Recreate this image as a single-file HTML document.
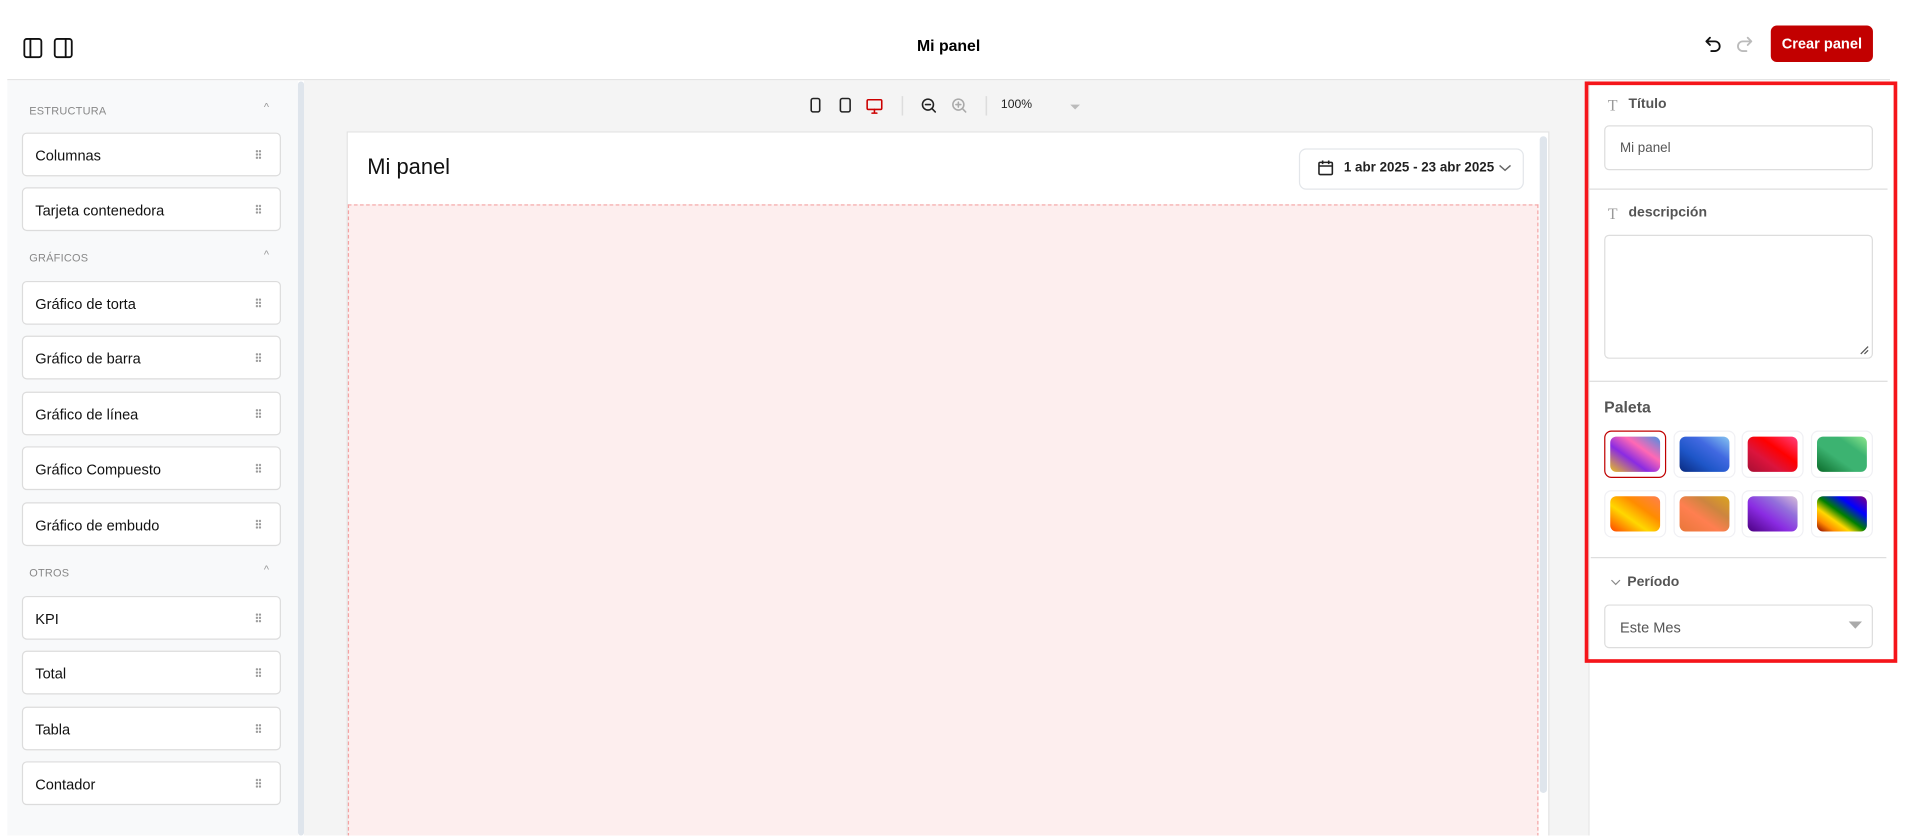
<!DOCTYPE html>
<html><head><meta charset="utf-8"><style>
*{box-sizing:border-box;margin:0;padding:0}
html,body{width:1907px;height:835px;overflow:hidden;background:#fff;font-family:"Liberation Sans",sans-serif}
#w{position:absolute;left:0;top:0;width:1568px;height:687px;transform:scale(1.21620);transform-origin:0 0;overflow:hidden}
.a{position:absolute}
.item{position:absolute;left:18px;width:213px;height:36px;background:#fff;border:1px solid #dcdcdc;border-radius:4px;font-size:12px;color:#111;padding:11px 0 0 10px}
.item:after{content:"";position:absolute;right:15px;top:13px;width:5px;height:8px;background:radial-gradient(circle,#999 0.8px,transparent 1.1px) 0 0/2.5px 2.7px}
.sec{position:absolute;left:24px;font-size:9px;color:#888;letter-spacing:.2px}
.car{position:absolute;left:217px;font-size:9px;color:#999}
.sw{position:absolute;width:51px;height:39px;border:1px solid #f0f0f4;border-radius:6px;padding:4px}
.sw div{width:100%;height:100%;border-radius:5px}
.lbl{position:absolute;font-size:11.5px;font-weight:bold;color:#555}
</style></head><body><div id="w">
<!-- header -->
<svg class="a" style="left:19px;top:31px" width="42" height="17" viewBox="0 0 42 17" fill="none" stroke="#111" stroke-width="1.5"><rect x="1" y="1" width="14" height="15" rx="2"/><line x1="6" y1="1" x2="6" y2="16"/><rect x="26" y="1" width="14" height="15" rx="2"/><line x1="35" y1="1" x2="35" y2="16"/></svg>
<div class="a" style="left:740px;top:30px;width:80px;text-align:center;font-size:13px;font-weight:bold">Mi panel</div>
<svg class="a" style="left:1401px;top:29px" width="42" height="16" viewBox="0 0 42 16" fill="none" stroke-width="1.5" stroke-linecap="round" stroke-linejoin="round"><path d="M5 2L2 5l3 3M2 5h7a4 4 0 010 8H6" stroke="#111"/><path d="M36 2l3 3-3 3M39 5h-7a4 4 0 000 8h3" stroke="#bbb"/></svg>
<div class="a" style="left:1456px;top:21px;width:84px;height:30px;background:#c20000;border-radius:5px;color:#fff;font-size:12px;font-weight:bold;text-align:center;line-height:30px">Crear panel</div>
<div class="a" style="left:6px;top:65px;width:1548px;height:1px;background:#e2e2e2"></div>
<!-- left sidebar -->
<div class="a" style="left:6px;top:66px;width:239px;height:621px;background:#f8f9fa"></div>
<div class="a" style="left:245px;top:67px;width:5px;height:620px;background:#dfe5ec;border-radius:3px"></div>
<div class="sec" style="top:86px">ESTRUCTURA</div><div class="car" style="top:83px">^</div>
<div class="item" style="top:109px">Columnas</div>
<div class="item" style="top:154px">Tarjeta contenedora</div>
<div class="sec" style="top:207px">GRÁFICOS</div><div class="car" style="top:204px">^</div>
<div class="item" style="top:231px">Gráfico de torta</div>
<div class="item" style="top:276px">Gráfico de barra</div>
<div class="item" style="top:322px">Gráfico de línea</div>
<div class="item" style="top:367px">Gráfico Compuesto</div>
<div class="item" style="top:413px">Gráfico de embudo</div>
<div class="sec" style="top:466px">OTROS</div><div class="car" style="top:463px">^</div>
<div class="item" style="top:490px">KPI</div>
<div class="item" style="top:535px">Total</div>
<div class="item" style="top:581px">Tabla</div>
<div class="item" style="top:626px">Contador</div>
<!-- canvas -->
<div class="a" style="left:250px;top:66px;width:1056px;height:621px;background:#f4f4f4"></div>
<svg class="a" style="left:662px;top:79px" width="240" height="16" viewBox="0 0 240 16" fill="none" stroke-width="1.3" stroke-linecap="round">
<rect x="5" y="2" width="7" height="11" rx="1.5" stroke="#222"/><rect x="29" y="2" width="8" height="11" rx="1.5" stroke="#222"/>
<rect x="51" y="3" width="12" height="8" rx="1" stroke="#c00"/><path d="M55 14h4M57 11v3" stroke="#c00"/>
<line x1="80" y1="0" x2="80" y2="16" stroke="#ddd"/>
<circle cx="101" cy="7" r="4.5" stroke="#222"/><path d="M99 7h4M104.5 10.5L107 13" stroke="#222"/>
<circle cx="126" cy="7" r="4.5" stroke="#aaa"/><path d="M124 7h4M126 5v4M129.5 10.5L132 13" stroke="#aaa"/>
<line x1="149" y1="0" x2="149" y2="16" stroke="#ddd"/>
<path d="M218 7l4 4 4-4z" fill="#bbb" stroke="none"/></svg>
<div class="a" style="left:823px;top:81px;font-size:10px;color:#222">100%</div>
<div class="a" style="left:285px;top:108px;width:989px;height:590px;background:#fff;border:1px solid #e3e3e3"></div>
<div class="a" style="left:302px;top:127px;font-size:18px;color:#111">Mi panel</div>
<div class="a" style="left:1068px;top:122px;width:185px;height:34px;border:1px solid #e3e6ea;border-radius:6px;background:#fff"></div>
<svg class="a" style="left:1083px;top:131px" width="14" height="14" viewBox="0 0 14 14" fill="none" stroke="#222" stroke-width="1.3"><rect x="1.5" y="2.5" width="11" height="10" rx="1"/><path d="M1.5 5.5h11M4.5 1v3M9.5 1v3"/></svg>
<div class="a" style="left:1105px;top:132px;font-size:11px;font-weight:bold;color:#222">1 abr 2025 - 23 abr 2025</div>
<svg class="a" style="left:1232px;top:134px" width="11" height="8" viewBox="0 0 11 8" fill="none" stroke="#666" stroke-width="1.2"><path d="M1 2l4.5 4L10 2"/></svg>
<div class="a" style="left:286px;top:168px;width:979px;height:530px;background:#fdeeee;border:1px dashed #f4a3a3"></div>
<div class="a" style="left:1266px;top:112px;width:6px;height:540px;background:#dfe5ec;border-radius:3px"></div>
<!-- right panel -->
<div class="a" style="left:1306px;top:66px;width:1px;height:621px;background:#e5e5e5"></div>
<div class="a" style="left:1303px;top:67px;width:257px;height:478px;border:3px solid #f5151a"></div>
<div class="a" style="left:1322px;top:79px;font-size:13px;color:#999;font-family:'Liberation Serif',serif">T</div>
<div class="lbl" style="left:1339px;top:80px">Título</div>
<div class="a" style="left:1319px;top:103px;width:221px;height:37px;border:1px solid #ddd;border-radius:4px;font-size:11px;color:#555;padding:12px 0 0 12px">Mi panel</div>
<div class="a" style="left:1306px;top:155px;width:246px;height:1px;background:#ddd"></div>
<div class="a" style="left:1322px;top:168px;font-size:13px;color:#999;font-family:'Liberation Serif',serif">T</div>
<div class="lbl" style="left:1339px;top:169px">descripción</div>
<div class="a" style="left:1319px;top:193px;width:221px;height:102px;border:1px solid #ddd;border-radius:4px"></div>
<svg class="a" style="left:1529px;top:284px" width="8" height="8" viewBox="0 0 8 8" stroke="#555" stroke-width="1"><path d="M1 7L7 1M4 7L7 4"/></svg>
<div class="a" style="left:1306px;top:313px;width:246px;height:1px;background:#ddd"></div>
<div class="a" style="left:1319px;top:327px;font-size:13px;font-weight:bold;color:#555">Paleta</div>
<div class="sw" style="left:1319px;top:354px;border:1px solid #c00000"><div style="background:linear-gradient(to top right,#e8c020,#8a2be2 38%,#ff69b4 65%,#4a90e2)"></div></div>
<div class="sw" style="left:1376px;top:354px"><div style="background:linear-gradient(to top right,#0a2a80,#1e56c8 35%,#4169e1 65%,#87c5f0)"></div></div>
<div class="sw" style="left:1432px;top:354px"><div style="background:linear-gradient(to top right,#a80f35,#dc143c 35%,#ff0000 62%,#ff4080)"></div></div>
<div class="sw" style="left:1489px;top:354px"><div style="background:linear-gradient(to top right,#0b6b2a,#3cb371 40%,#3cb371 70%,#8ce68c)"></div></div>
<div class="sw" style="left:1319px;top:403px"><div style="background:linear-gradient(to top right,#ff4500,#ffd700 38%,#ff8c00 65%,#ff7f50)"></div></div>
<div class="sw" style="left:1376px;top:403px"><div style="background:linear-gradient(to top right,#e8773a,#ff7f50 40%,#cd853f 68%,#daa520)"></div></div>
<div class="sw" style="left:1432px;top:403px"><div style="background:linear-gradient(to top right,#4b0082,#8a2be2 40%,#9370db 70%,#d8bfd8)"></div></div>
<div class="sw" style="left:1489px;top:403px"><div style="background:linear-gradient(to top right,#8b0000,#ff8c00 18%,#ffd700 33%,#008000 50%,#0000ff 72%,#800080)"></div></div>
<div class="a" style="left:1308px;top:458px;width:243px;height:1px;background:#ddd"></div>
<svg class="a" style="left:1324px;top:476px" width="9" height="6" viewBox="0 0 9 6" fill="none" stroke="#888" stroke-width="1"><path d="M1 1l3.5 3.5L8 1"/></svg>
<div class="lbl" style="left:1338px;top:473px">Período</div>
<div class="a" style="left:1319px;top:497px;width:221px;height:36px;border:1px solid #ddd;border-radius:4px;font-size:12px;color:#555;padding:11px 0 0 12px">Este Mes</div>
<svg class="a" style="left:1520px;top:511px" width="11" height="6" viewBox="0 0 11 6"><path d="M0 0h11L5.5 6z" fill="#aaa"/></svg>
</div></body></html>
